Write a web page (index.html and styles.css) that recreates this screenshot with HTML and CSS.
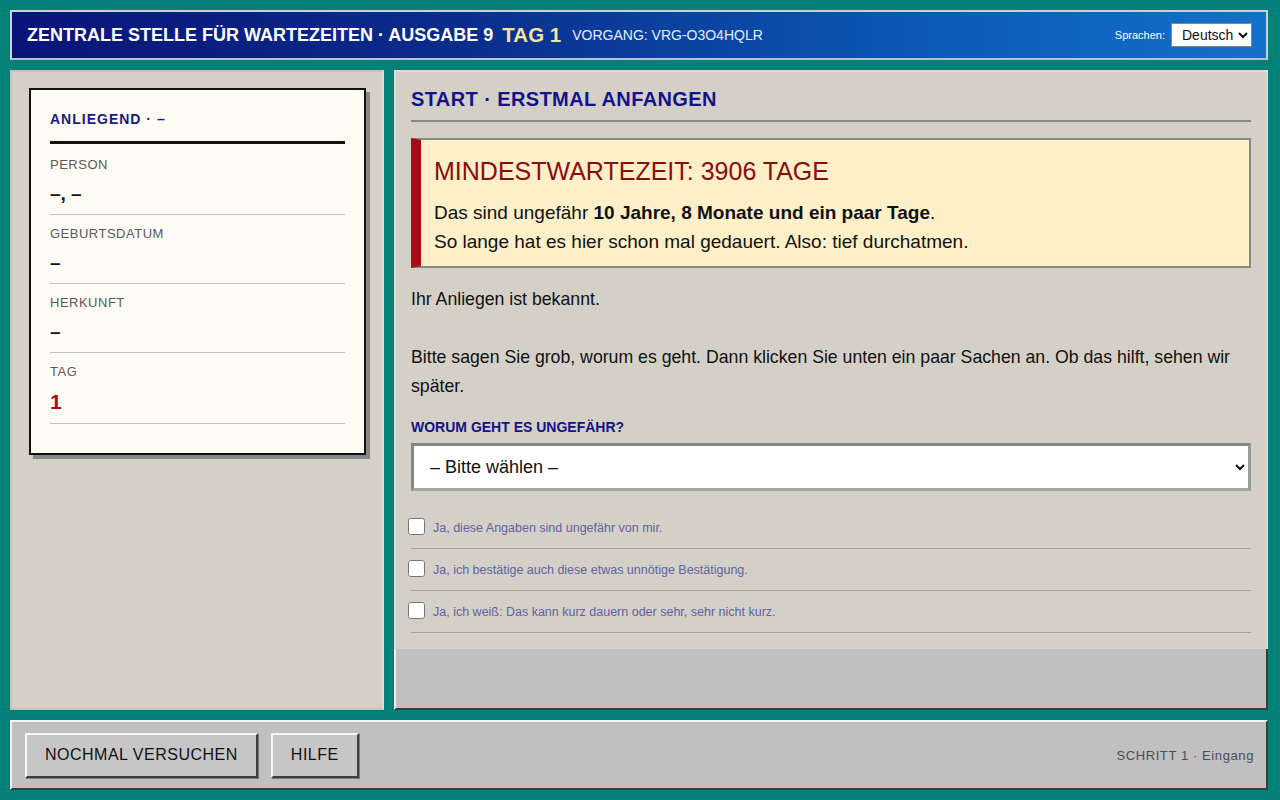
FILE: index.html
```html
<!DOCTYPE html>
<html lang="de">
<head>
<meta charset="utf-8">
<title>Zentrale Stelle für Wartezeiten</title>
<link rel="stylesheet" href="styles.css">
</head>
<body>
<div class="app">
  <header class="topbar">
    <div class="brand">ZENTRALE STELLE FÜR WARTEZEITEN · AUSGABE 9</div>
    <div class="day">TAG 1</div>
    <div class="case">VORGANG: VRG-O3O4HQLR</div>
    <div class="lang">
      <label class="lang-label" for="lang">Sprachen:</label>
      <select id="lang" class="lang-select">
        <option>Deutsch</option>
      </select>
    </div>
  </header>

  <aside class="side">
    <div class="card">
      <div class="card-head">ANLIEGEND · –</div>
      <div class="field first">
        <div class="field-label">PERSON</div>
        <div class="field-value">–, –</div>
      </div>
      <div class="field">
        <div class="field-label">GEBURTSDATUM</div>
        <div class="field-value">–</div>
      </div>
      <div class="field">
        <div class="field-label">HERKUNFT</div>
        <div class="field-value">–</div>
      </div>
      <div class="field">
        <div class="field-label">TAG</div>
        <div class="field-value red">1</div>
      </div>
    </div>
  </aside>

  <main class="main">
    <div class="content">
      <h1 class="title">START · ERSTMAL ANFANGEN</h1>
      <div class="alert">
        <div class="alert-head">MINDESTWARTEZEIT: 3906 TAGE</div>
        <div class="alert-text">Das sind ungefähr <b>10 Jahre, 8 Monate und ein paar Tage</b>.</div>
        <div class="alert-text">So lange hat es hier schon mal gedauert. Also: tief durchatmen.</div>
      </div>
      <p class="text first-text">Ihr Anliegen ist bekannt.</p>
      <p class="text">Bitte sagen Sie grob, worum es geht. Dann klicken Sie unten ein paar Sachen an. Ob das hilft, sehen wir später.</p>
      <label class="q-label" for="topic">WORUM GEHT ES UNGEFÄHR?</label>
      <select id="topic" class="topic">
        <option>– Bitte wählen –</option>
      </select>
      <div class="checks">
        <label class="check"><input type="checkbox"><span>Ja, diese Angaben sind ungefähr von mir.</span></label>
        <label class="check"><input type="checkbox"><span>Ja, ich bestätige auch diese etwas unnötige Bestätigung.</span></label>
        <label class="check"><input type="checkbox"><span>Ja, ich weiß: Das kann kurz dauern oder sehr, sehr nicht kurz.</span></label>
      </div>
    </div>
  </main>

  <footer class="footer">
    <button class="btn">NOCHMAL VERSUCHEN</button>
    <button class="btn">HILFE</button>
    <div class="step">SCHRITT 1 · Eingang</div>
  </footer>
</div>
</body>
</html>
```
FILE: styles.css
```css
* { box-sizing: border-box; }

html, body {
  margin: 0;
  height: 100%;
}

body {
  background: #038078;
  font-family: "Liberation Sans", Arial, sans-serif;
  color: #111;
}

.app {
  height: 800px;
  padding: 10px 12px 10px 10px;
  display: grid;
  grid-template-columns: 374px 1fr;
  grid-template-rows: 50px 1fr 70px;
  gap: 10px;
}

/* ---------- Top bar ---------- */
.topbar {
  grid-column: 1 / 3;
  display: flex;
  align-items: center;
  padding: 0 14px 0 15px;
  background: linear-gradient(90deg, #0a1478 0%, #0a2c8c 35%, #0c5cb8 75%, #1470c8 100%);
  border: 2px solid #c9d2dc;
  border-bottom-color: #b8c2cc;
  color: #fff;
}

.brand {
  font-size: 18px;
  font-weight: bold;
  letter-spacing: 0;
}

.day {
  margin-left: 9px;
  font-size: 20.5px;
  font-weight: bold;
  color: #f3e59a;
}

.case {
  margin-left: 11px;
  font-size: 14px;
  letter-spacing: 0;
  color: #e6ecff;
}

.lang {
  margin-left: auto;
  display: flex;
  align-items: center;
  gap: 6px;
}

.lang-label {
  font-size: 11px;
  color: #fff;
}

.lang-select {
  height: 24px;
  width: 81px;
  font-family: "Liberation Sans", Arial, sans-serif;
  font-size: 14px;
  border: 1px solid #7a8a9a;
  background: #fff;
  color: #111;
  padding: 0 2px 0 6px;
}

/* ---------- Side panel ---------- */
.side {
  background: #d4d0c8;
  border: 2px solid #c6c3bb;
  border-right-color: #dedbd4;
  padding: 16px 16px 0 17px;
}

.card {
  background: #fdfcf4;
  border: 2px solid #111;
  box-shadow: 4px 4px 0 #8a8884;
  padding: 19px 19px 29px 19px;
}

.card-head {
  font-size: 14px;
  font-weight: bold;
  color: #1a1a80;
  letter-spacing: 1px;
  line-height: 20px;
  padding-bottom: 12px;
  border-bottom: 3px solid #111;
}

.field {
  padding: 11px 0 8px;
  border-bottom: 1px solid #c4c1b8;
}

.field.first {
  padding-top: 13px;
}

.field-label {
  font-size: 13px;
  line-height: 16px;
  color: #5a5a5a;
  letter-spacing: 0.5px;
}

.field-value {
  margin-top: 9px;
  font-size: 19px;
  font-weight: bold;
  line-height: 24px;
}

.field-value.red {
  color: #a80c18;
  font-size: 21px;
  line-height: 26px;
}

/* ---------- Main ---------- */
.main {
  background: #bfc0bf;
  border-top: 2px solid #f2f2f2;
  border-left: 2px solid #f2f2f2;
  border-right: 2px solid #3c3c3c;
  border-bottom: 2px solid #3c3c3c;
}

.content {
  margin: -2px -2px 0 -2px;
  background: #d4d0c8;
  border: 2px solid #dedbd4;
  border-bottom: none;
  padding: 16px 15px 16px 15px;
}

.title {
  margin: 0;
  font-size: 20px;
  font-weight: bold;
  color: #12128a;
  letter-spacing: 0.4px;
  line-height: 22px;
  padding-bottom: 10px;
  border-bottom: 2px solid #8a8884;
}

.alert {
  margin-top: 16px;
  background: #fdefc8;
  border: 2px solid #8a8884;
  border-left: 10px solid #a80c18;
  padding: 17px 14px 10px 13px;
}

.alert-head {
  font-size: 25px;
  line-height: 28px;
  color: #8a0c0c;
  margin-bottom: 13px;
}

.alert-text {
  font-size: 19px;
  line-height: 29px;
}

.text {
  margin: 0;
  font-size: 17.7px;
  line-height: 29px;
}

.first-text {
  margin: 17px 0 29px;
}

.q-label {
  display: block;
  margin-top: 18px;
  font-size: 14px;
  font-weight: bold;
  line-height: 16px;
  color: #12128a;
}

.topic {
  display: block;
  width: 100%;
  height: 48px;
  margin-top: 8px;
  font-family: "Liberation Sans", Arial, sans-serif;
  font-size: 18px;
  color: #111;
  background: #fff;
  border: 3px solid #858585;
  border-right-color: #9c9c9c;
  border-bottom-color: #a4a4a4;
  padding: 0 8px 0 12px;
}

.checks {
  margin-top: 16px;
}

.check {
  display: flex;
  align-items: center;
  height: 42px;
  border-bottom: 1px solid #a9a59d;
  gap: 8px;
  font-size: 12.5px;
  color: #6262a2;
}

.check input {
  width: 17px;
  height: 17px;
  margin: 0 0 2px -3px;
}

/* ---------- Footer ---------- */
.footer {
  grid-column: 1 / 3;
  display: flex;
  align-items: center;
  gap: 13px;
  padding: 0 12px 0 13px;
  background: #c0c0c0;
  border-top: 2px solid #f4f4f4;
  border-left: 2px solid #f4f4f4;
  border-right: 2px solid #3c3c3c;
  border-bottom: 2px solid #3c3c3c;
}

.btn {
  height: 45px;
  padding: 0 18px;
  font-family: "Liberation Sans", Arial, sans-serif;
  font-size: 16px;
  letter-spacing: 0.5px;
  color: #111;
  background: #c6c6c6;
  border-top: 2px solid #f6f6f6;
  border-left: 2px solid #f6f6f6;
  border-right: 2px solid #404040;
  border-bottom: 2px solid #404040;
  box-shadow: 1px 1px 0 #7a7a7a;
}

.step {
  margin-left: auto;
  font-size: 13px;
  letter-spacing: 0.6px;
  color: #4c4c5c;
}
```
